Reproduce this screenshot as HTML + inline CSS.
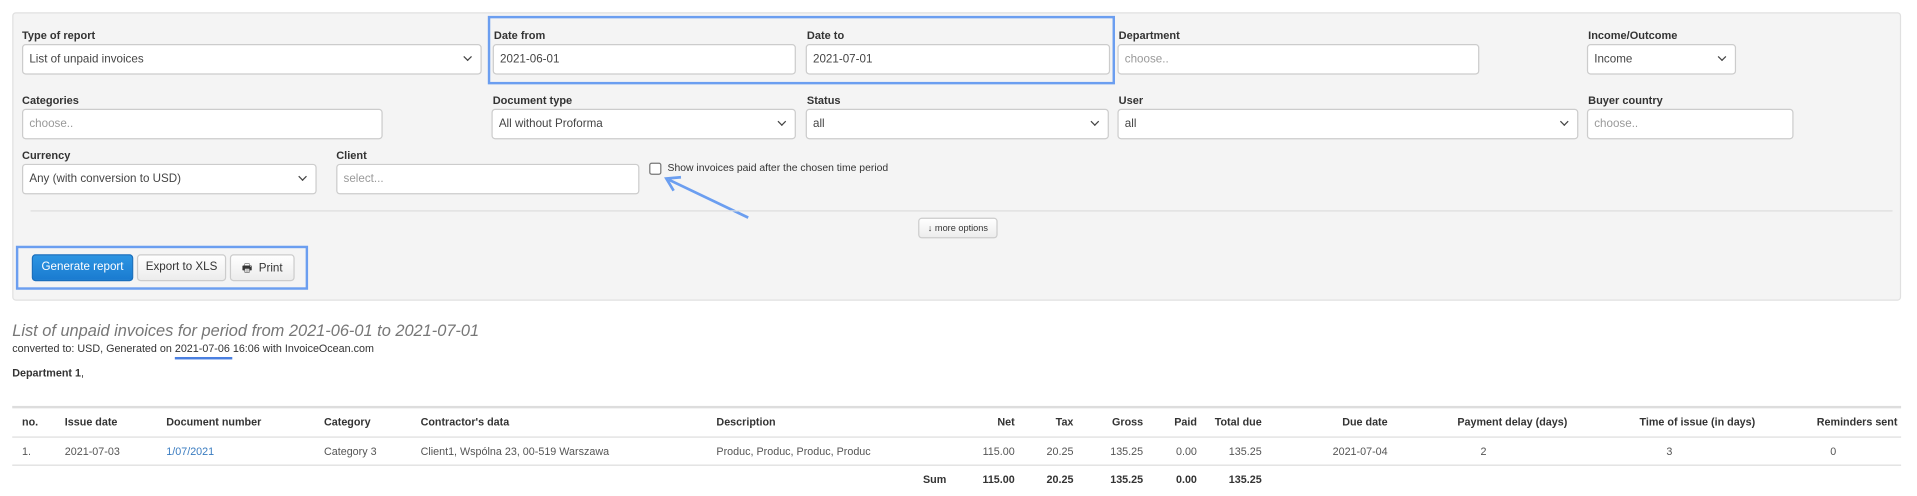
<!DOCTYPE html>
<html><head><meta charset="utf-8"><style>
html,body{margin:0;padding:0;width:1917px;height:496px;overflow:hidden;background:#fff}
#w{position:absolute;left:0;top:0;width:1568px;height:406px;transform:scale(1.22258);transform-origin:0 0;font-family:"Liberation Sans",Arial,sans-serif;color:#333}
.a{position:absolute;white-space:nowrap}
.lb{font-size:9px;font-weight:bold;color:#333}
.in{position:absolute;background:#fff;border:1px solid #ccc;border-radius:3px;box-sizing:border-box;font-size:9.5px;color:#444;padding-left:5px;line-height:23px;height:25px}
.ph{color:#999}
.sel::after{content:"";position:absolute;right:8px;top:7px;width:4px;height:4px;border-right:1.5px solid #444;border-bottom:1.5px solid #444;transform:rotate(45deg)}
.btn{position:absolute;box-sizing:border-box;border:1px solid #ccc;border-radius:3px;background:linear-gradient(#fff,#ececec);font-size:9.5px;text-align:center;line-height:20px;height:22px;color:#333}
.t{font-size:8.8px;color:#555}
.th{font-size:8.8px;font-weight:bold;color:#333}
.hl{position:absolute;left:10px;width:1545px;height:1px;background:#ddd}
</style></head><body><div id="w">
<div class="a" style="left:10px;top:10px;width:1545px;height:236px;background:#f4f4f4;border:1px solid #e0e0e0;border-radius:3px;box-sizing:border-box"></div>

<div class="a lb" style="left:18px;top:24px">Type of report</div>
<div class="in sel" style="left:18px;top:36px;width:376px">List of unpaid invoices</div>
<div class="a lb" style="left:404px;top:24px">Date from</div>
<div class="in" style="left:403px;top:36px;width:248px">2021-06-01</div>
<div class="a lb" style="left:660px;top:24px">Date to</div>
<div class="in" style="left:659px;top:36px;width:249px">2021-07-01</div>
<div class="a lb" style="left:915px;top:24px">Department</div>
<div class="in ph" style="left:914px;top:36px;width:296px">choose..</div>
<div class="a lb" style="left:1299px;top:24px">Income/Outcome</div>
<div class="in sel" style="left:1298px;top:36px;width:122px">Income</div>
<div class="a" style="left:399px;top:13px;width:513px;height:56px;border:2px solid #6b9ef0;box-sizing:border-box"></div>

<div class="a lb" style="left:18px;top:77px">Categories</div>
<div class="in ph" style="left:18px;top:89px;width:295px">choose..</div>
<div class="a lb" style="left:403px;top:77px">Document type</div>
<div class="in sel" style="left:402px;top:89px;width:249px">All without Proforma</div>
<div class="a lb" style="left:660px;top:77px">Status</div>
<div class="in sel" style="left:659px;top:89px;width:248px">all</div>
<div class="a lb" style="left:915px;top:77px">User</div>
<div class="in sel" style="left:914px;top:89px;width:377px">all</div>
<div class="a lb" style="left:1299px;top:77px">Buyer country</div>
<div class="in ph" style="left:1298px;top:89px;width:169px">choose..</div>

<div class="a lb" style="left:18px;top:122px">Currency</div>
<div class="in sel" style="left:18px;top:134px;width:241px">Any (with conversion to USD)</div>
<div class="a lb" style="left:275px;top:122px">Client</div>
<div class="in ph" style="left:275px;top:134px;width:248px">select...</div>
<div class="a" style="left:531px;top:133px;width:8px;height:8px;border:1px solid #777;border-radius:2px;background:#fff"></div>
<div class="a" style="left:546px;top:132px;font-size:8.5px;color:#333">Show invoices paid after the chosen time period</div>
<svg class="a" style="left:530px;top:135px" width="100" height="50"><line x1="82" y1="43" x2="17" y2="12" stroke="#6b9ef0" stroke-width="2.2"/><polyline points="27,10 15,11 21,21" fill="none" stroke="#6b9ef0" stroke-width="2.2"/></svg>

<div class="a" style="left:25px;top:172px;width:1523px;height:1px;background:#ddd"></div>
<div class="btn" style="left:751px;top:178px;width:65px;height:17px;line-height:15px;font-size:7.5px">↓ more options</div>

<div class="a" style="left:13px;top:201px;width:239px;height:36px;border:2px solid #6b9ef0;box-sizing:border-box"></div>
<div class="btn" style="left:26px;top:208px;width:83px;background:linear-gradient(#2d95e3,#1a7bd0);border-color:#1a6fbd;color:#fff">Generate report</div>
<div class="btn" style="left:112px;top:208px;width:73px">Export to XLS</div>
<div class="btn" style="left:188px;top:208px;width:53px"><span style="font-size:9px">🖶</span>&nbsp; Print</div>

<div class="a" style="left:10px;top:263px;font-size:13.4px;font-style:italic;color:#777">List of unpaid invoices for period from 2021-06-01 to 2021-07-01</div>
<div class="a" style="left:10px;top:280px;font-size:8.8px;color:#333">converted to: USD, Generated on 2021-07-06 16:06 with InvoiceOcean.com</div>
<div class="a" style="left:143px;top:292px;width:47px;height:2px;background:#4a7fe0"></div>
<div class="a" style="left:10px;top:300px;font-size:8.8px;font-weight:bold;color:#333">Department 1<span style="font-weight:normal">,</span></div>

<div class="hl" style="top:332px;height:2px"></div>
<div class="hl" style="top:357px"></div>
<div class="hl" style="top:380px"></div>

<div class="a th" style="left:18px;top:340px">no.</div>
<div class="a th" style="left:53px;top:340px">Issue date</div>
<div class="a th" style="left:136px;top:340px">Document number</div>
<div class="a th" style="left:265px;top:340px">Category</div>
<div class="a th" style="left:344px;top:340px">Contractor's data</div>
<div class="a th" style="left:586px;top:340px">Description</div>
<div class="a th" style="right:738px;top:340px">Net</div>
<div class="a th" style="right:690px;top:340px">Tax</div>
<div class="a th" style="right:633px;top:340px">Gross</div>
<div class="a th" style="right:589px;top:340px">Paid</div>
<div class="a th" style="right:536px;top:340px">Total due</div>
<div class="a th" style="right:433px;top:340px">Due date</div>
<div class="a th" style="left:1192px;top:340px">Payment delay (days)</div>
<div class="a th" style="left:1341px;top:340px">Time of issue (in days)</div>
<div class="a th" style="right:16px;top:340px">Reminders sent</div>

<div class="a t" style="left:18px;top:364px">1.</div>
<div class="a t" style="left:53px;top:364px">2021-07-03</div>
<div class="a t" style="left:136px;top:364px;color:#3a7cc0">1/07/2021</div>
<div class="a t" style="left:265px;top:364px">Category 3</div>
<div class="a t" style="left:344px;top:364px">Client1, Wspólna 23, 00-519 Warszawa</div>
<div class="a t" style="left:586px;top:364px">Produc, Produc, Produc, Produc</div>
<div class="a t" style="right:738px;top:364px">115.00</div>
<div class="a t" style="right:690px;top:364px">20.25</div>
<div class="a t" style="right:633px;top:364px">135.25</div>
<div class="a t" style="right:589px;top:364px">0.00</div>
<div class="a t" style="right:536px;top:364px">135.25</div>
<div class="a t" style="right:433px;top:364px">2021-07-04</div>
<div class="a t" style="left:1211px;top:364px">2</div>
<div class="a t" style="left:1363px;top:364px">3</div>
<div class="a t" style="left:1497px;top:364px">0</div>

<div class="a th" style="right:794px;top:387px">Sum</div>
<div class="a th" style="right:738px;top:387px">115.00</div>
<div class="a th" style="right:690px;top:387px">20.25</div>
<div class="a th" style="right:633px;top:387px">135.25</div>
<div class="a th" style="right:589px;top:387px">0.00</div>
<div class="a th" style="right:536px;top:387px">135.25</div>
</div></body></html>
